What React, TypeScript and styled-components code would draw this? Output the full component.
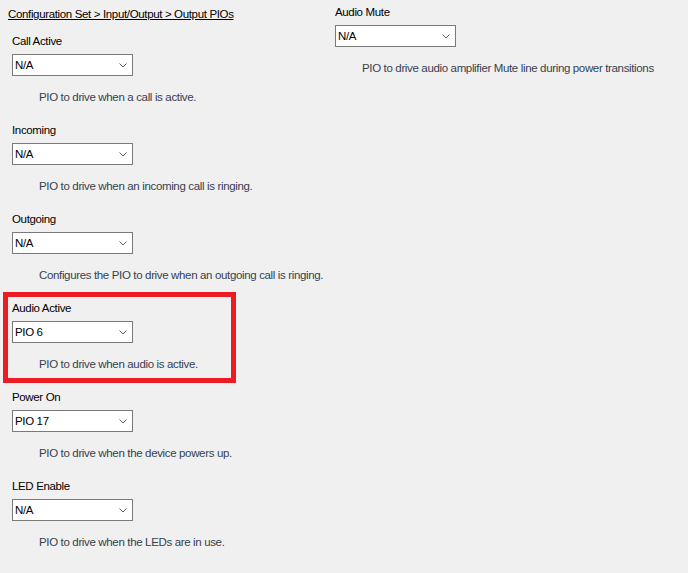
import React from "react";
import styled, { createGlobalStyle } from "styled-components";

const Global = createGlobalStyle`
  html, body { margin: 0; padding: 0; background: #f0f0f0; }
  body {
    font-family: "Liberation Sans", Arial, sans-serif;
    font-size: 11.5px;
    letter-spacing: -0.35px;
    color: #000;
  }
`;

const Page = styled.div`
  display: flex;
  width: 688px;
  height: 573px;
  background: #f0f0f0;
  overflow: hidden;
`;

const LeftColumn = styled.div`
  width: 335px;
  padding-top: 7px;
  display: flex;
  flex-direction: column;
`;

const RightColumn = styled.div`
  flex: 1;
  padding-top: 5px;
  display: flex;
  flex-direction: column;
`;

const Breadcrumb = styled.div`
  margin-left: 8px;
  line-height: 15px;
  text-decoration: underline;
  margin-bottom: 12px;
  white-space: nowrap;
`;

const Group = styled.div<{ $highlight?: boolean; $indent?: number }>`
  position: relative;
  display: flex;
  flex-direction: column;
  align-items: flex-start;
  padding-left: ${(p) => p.$indent ?? 12}px;
  margin-bottom: 18px;
  ${(p) =>
    p.$highlight
      ? `&::after {
    content: "";
    position: absolute;
    left: 3px;
    top: -9px;
    width: 223px;
    height: 81px;
    border: 5px solid #ed1c24;
    pointer-events: none;
  }`
      : ""}
`;

const Label = styled.div`
  line-height: 15px;
  white-space: nowrap;
`;

const Combo = styled.div`
  margin-top: 5px;
  box-sizing: border-box;
  width: 121px;
  height: 22px;
  border: 1px solid #7a7a7a;
  background: #fff;
  display: flex;
  align-items: center;
  justify-content: space-between;
  padding: 0 5px 0 2px;
`;

const ComboText = styled.span`
  line-height: 15px;
`;

const Description = styled.div`
  margin-top: 14px;
  margin-left: 27px;
  line-height: 15px;
  color: #36414f;
  white-space: nowrap;
`;

const Chevron = () => (
  <svg width="8" height="5" viewBox="0 0 8 5">
    <path d="M0.5 0.5 L4 4 L7.5 0.5" fill="none" stroke="#606060" strokeWidth="1" />
  </svg>
);

type Field = { label: string; value: string; desc: string; highlight?: boolean };

const leftFields: Field[] = [
  { label: "Call Active", value: "N/A", desc: "PIO to drive when a call is active." },
  { label: "Incoming", value: "N/A", desc: "PIO to drive when an incoming call is ringing." },
  { label: "Outgoing", value: "N/A", desc: "Configures the PIO to drive when an outgoing call is ringing." },
  { label: "Audio Active", value: "PIO 6", desc: "PIO to drive when audio is active.", highlight: true },
  { label: "Power On", value: "PIO 17", desc: "PIO to drive when the device powers up." },
  { label: "LED Enable", value: "N/A", desc: "PIO to drive when the LEDs are in use." },
];

const FieldGroup = ({ f, indent }: { f: Field; indent?: number }) => (
  <Group $highlight={f.highlight} $indent={indent}>
    <Label>{f.label}</Label>
    <Combo>
      <ComboText>{f.value}</ComboText>
      <Chevron />
    </Combo>
    <Description>{f.desc}</Description>
  </Group>
);

export default function App() {
  return (
    <>
      <Global />
      <Page>
        <LeftColumn>
          <Breadcrumb>Configuration Set &gt; Input/Output &gt; Output PIOs</Breadcrumb>
          {leftFields.map((f) => (
            <FieldGroup key={f.label} f={f} />
          ))}
        </LeftColumn>
        <RightColumn>
          <FieldGroup
            indent={0}
            f={{
              label: "Audio Mute",
              value: "N/A",
              desc: "PIO to drive audio amplifier Mute line during power transitions",
            }}
          />
        </RightColumn>
      </Page>
    </>
  );
}
